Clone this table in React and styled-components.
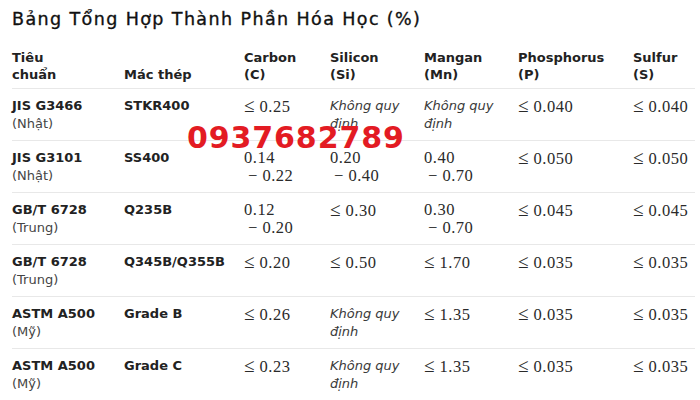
import React from "react";
import styled, { createGlobalStyle } from "styled-components";

const Global = createGlobalStyle`
  html, body { margin: 0; padding: 0; background: #fff; }
  body { font-family: "DejaVu Sans", "Noto Sans", sans-serif; color: #222; }
`;

const Page = styled.div`
  position: relative;
  width: 700px;
  height: 400px;
  overflow: hidden;
  padding: 7px 5px 0 12px;
  box-sizing: border-box;
`;

const Title = styled.h1`
  margin: 0;
  font-family: "DejaVu Sans", sans-serif;
  font-weight: 400;
  font-size: 17.5px;
  line-height: 24px;
  letter-spacing: 1.4px;
  color: #111;
  -webkit-text-stroke: 0.35px #111;
`;

const Table = styled.div`
  margin-top: 18px;
  display: flex;
  flex-direction: column;
`;

const cols = "112px 120px 86px 94px 94px 115px 1fr";

const HeadRow = styled.div`
  display: grid;
  grid-template-columns: ${cols};
  align-items: end;
  padding-bottom: 5px;
  border-bottom: 1px solid #e8e8e8;
`;

const Row = styled.div`
  display: grid;
  grid-template-columns: ${cols};
  align-items: start;
  height: 52px;
  box-sizing: border-box;
  padding-top: 8px;
  border-bottom: ${(p) => (p.$last ? "none" : "1px solid #e8e8e8")};
`;

const Th = styled.div`
  font-weight: 700;
  font-size: 13px;
  line-height: 17px;
  color: #222;
`;

const Cell = styled.div`
  font-size: 13px;
  line-height: 17.5px;
  color: #222;
`;

const Strong = styled.div`
  font-weight: 700;
  color: #222;
`;

const Sub = styled.div`
  color: #444;
`;

const Italic = styled.div`
  font-style: italic;
  font-size: 13px;
  line-height: 17.5px;
  color: #3a3a3a;
`;

const Math = styled.div`
  font-family: "Liberation Serif", "DejaVu Serif", serif;
  font-size: 16.5px;
  line-height: 17.5px;
  letter-spacing: 0.5px;
  color: #2a2a2a;
  white-space: pre;
`;

const MathLine = styled.div`
  padding-left: ${(p) => (p.$indent ? "4px" : "0")};
`;

const Rel = styled.span`
  font-size: ${(p) => (p.$big ? "19px" : "16.5px")};
  line-height: 17px;
`;

const Watermark = styled.div`
  position: absolute;
  left: 187px;
  top: 121px;
  font-family: "DejaVu Sans", sans-serif;
  font-weight: 700;
  font-size: 30px;
  line-height: 34px;
  letter-spacing: 0.9px;
  color: #e31b23;
  pointer-events: none;
`;

const M = ({ v }) => {
  if (Array.isArray(v)) {
    return (
      <Math>
        <MathLine>{v[0]}</MathLine>
        <MathLine $indent>
          <Rel>−</Rel> {v[1]}
        </MathLine>
      </Math>
    );
  }
  if (v === "none") {
    return (
      <Italic>
        Không quy
        <br />
        định
      </Italic>
    );
  }
  return (
    <Math>
      <Rel $big>≤</Rel> {v}
    </Math>
  );
};

const rows = [
  ["JIS G3466", "(Nhật)", "STKR400", "0.25", "none", "none", "0.040", "0.040"],
  ["JIS G3101", "(Nhật)", "SS400", ["0.14", "0.22"], ["0.20", "0.40"], ["0.40", "0.70"], "0.050", "0.050"],
  ["GB/T 6728", "(Trung)", "Q235B", ["0.12", "0.20"], "0.30", ["0.30", "0.70"], "0.045", "0.045"],
  ["GB/T 6728", "(Trung)", "Q345B/Q355B", "0.20", "0.50", "1.70", "0.035", "0.035"],
  ["ASTM A500", "(Mỹ)", "Grade B", "0.26", "none", "1.35", "0.035", "0.035"],
  ["ASTM A500", "(Mỹ)", "Grade C", "0.23", "none", "1.35", "0.035", "0.035"],
];

export default function App() {
  return (
    <>
      <Global />
      <Page>
        <Title>Bảng Tổng Hợp Thành Phần Hóa Học (%)</Title>
        <Table>
          <HeadRow>
            <Th>Tiêu<br />chuẩn</Th>
            <Th>Mác thép</Th>
            <Th>Carbon<br />(C)</Th>
            <Th>Silicon<br />(Si)</Th>
            <Th>Mangan<br />(Mn)</Th>
            <Th>Phosphorus<br />(P)</Th>
            <Th>Sulfur<br />(S)</Th>
          </HeadRow>
          {rows.map((r, i) => (
            <Row key={i} $last={i === rows.length - 1}>
              <Cell>
                <Strong>{r[0]}</Strong>
                <Sub>{r[1]}</Sub>
              </Cell>
              <Cell>
                <Strong>{r[2]}</Strong>
              </Cell>
              <M v={r[3]} />
              <M v={r[4]} />
              <M v={r[5]} />
              <M v={r[6]} />
              <M v={r[7]} />
            </Row>
          ))}
        </Table>
        <Watermark>0937682789</Watermark>
      </Page>
    </>
  );
}
